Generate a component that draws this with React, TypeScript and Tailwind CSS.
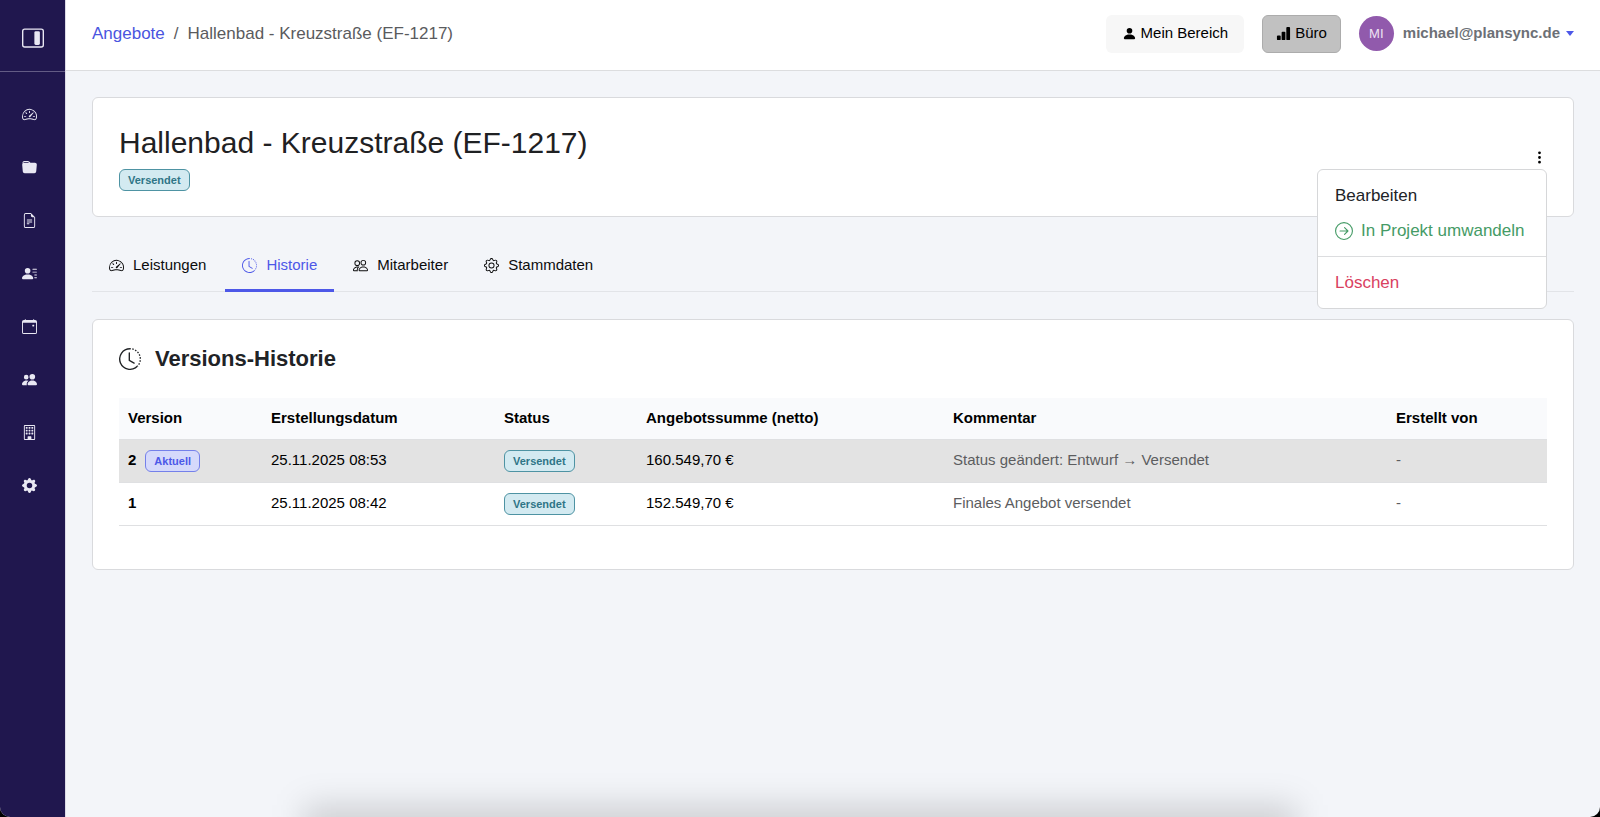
import type { IconType } from 'react-icons'
import {
  BsArrowRightCircle,
  BsBarChartFill,
  BsBuilding,
  BsCalendarEvent,
  BsClockHistory,
  BsFileEarmarkText,
  BsFolderFill,
  BsGear,
  BsGearFill,
  BsLayoutSidebarInsetReverse,
  BsPeople,
  BsPeopleFill,
  BsPersonFill,
  BsPersonLinesFill,
  BsSpeedometer2,
  BsThreeDotsVertical,
} from 'react-icons/bs'

// ─── Data ─────────────────────────────────────────────────────────────────────

interface NavItem {
  label: string
  icon: IconType
}

const NAV_ITEMS: NavItem[] = [
  { label: 'Dashboard', icon: BsSpeedometer2 },
  { label: 'Projekte', icon: BsFolderFill },
  { label: 'Angebote', icon: BsFileEarmarkText },
  { label: 'Kontakte', icon: BsPersonLinesFill },
  { label: 'Kalender', icon: BsCalendarEvent },
  { label: 'Mitarbeiter', icon: BsPeopleFill },
  { label: 'Firma', icon: BsBuilding },
  { label: 'Einstellungen', icon: BsGearFill },
]

const TABS: NavItem[] = [
  { label: 'Leistungen', icon: BsSpeedometer2 },
  { label: 'Historie', icon: BsClockHistory },
  { label: 'Mitarbeiter', icon: BsPeople },
  { label: 'Stammdaten', icon: BsGear },
]

interface Version {
  version: number
  current: boolean
  createdAt: string
  status: string
  total: string
  comment: string
  createdBy: string
}

const VERSIONS: Version[] = [
  {
    version: 2,
    current: true,
    createdAt: '25.11.2025 08:53',
    status: 'Versendet',
    total: '160.549,70 €',
    comment: 'Status geändert: Entwurf → Versendet',
    createdBy: '-',
  },
  {
    version: 1,
    current: false,
    createdAt: '25.11.2025 08:42',
    status: 'Versendet',
    total: '152.549,70 €',
    comment: 'Finales Angebot versendet',
    createdBy: '-',
  },
]

// ─── Sub-components ───────────────────────────────────────────────────────────

function StatusBadge({ label }: { label: string }) {
  return (
    <span className="inline-block rounded-md border border-[#4e93a3] bg-[#d3eaf1] px-2 text-[11px] leading-5 font-bold text-[#2f7587]">
      {label}
    </span>
  )
}

function CurrentBadge() {
  return (
    <span className="inline-block rounded-md border border-[#7480ea] bg-[#d5d9fb] px-2 text-[11px] leading-5 font-bold text-[#4d58e8]">
      Aktuell
    </span>
  )
}

function Sidebar() {
  return (
    <aside className="flex w-[66px] shrink-0 flex-col border-r border-[#dcdae6] bg-[#20174e] text-[#e9e8f3]">
      <div className="flex h-[72px] items-center border-b border-[#635c85] pt-1 pl-[22px]">
        <button type="button" aria-label="Seitenleiste">
          <BsLayoutSidebarInsetReverse size={22} />
        </button>
      </div>
      <nav className="flex flex-col pt-4">
        {NAV_ITEMS.map(({ label, icon: Icon }) => (
          <a key={label} href="#" aria-label={label} className="flex h-[53px] items-center pl-[22px]">
            <Icon size={15} />
          </a>
        ))}
      </nav>
    </aside>
  )
}

function TopBar() {
  return (
    <header className="flex h-[71px] items-center justify-between border-b border-[#dcdddf] bg-white px-[26px] pb-[3px]">
      <nav aria-label="Breadcrumb" className="flex gap-[9px] text-[17px] text-[#5a5b5e]">
        <a href="#" className="text-[#4a55e0]">
          Angebote
        </a>
        <span>/</span>
        <span>Hallenbad - Kreuzstraße (EF-1217)</span>
      </nav>
      <div className="flex items-center gap-[18px] text-[15px]">
        <button type="button" className="flex h-[38px] items-center gap-1 rounded-md bg-[#f7f7f7] px-4">
          <BsPersonFill size={15} />
          Mein Bereich
        </button>
        <button
          type="button"
          className="flex h-[38px] items-center gap-1 rounded-md border border-[#acacac] bg-[#c1c1c1] px-[13px]"
        >
          <BsBarChartFill size={15} />
          Büro
        </button>
        <button type="button" className="flex items-center gap-[9px] font-bold text-[#6c7076]">
          <span className="flex size-[35px] items-center justify-center rounded-full bg-[#915aac] text-[13px] font-normal text-[#eee3f3]">
            MI
          </span>
          <span className="flex items-center gap-[6px]">
            michael@plansync.de
            <span className="border-x-4 border-t-5 border-x-transparent border-t-[#4d58e8]" />
          </span>
        </button>
      </div>
    </header>
  )
}

function ActionsMenu() {
  return (
    <div className="relative">
      <button type="button" aria-label="Aktionen" className="flex h-6 w-[15px] items-center">
        <BsThreeDotsVertical size={15} />
      </button>
      <div className="absolute top-full right-0 z-10 w-[230px] rounded-md border border-[#d6d7d9] bg-white py-2 text-[17px]">
        <a href="#" className="block px-[17px] leading-[35px] text-[#212326]">
          Bearbeiten
        </a>
        <a href="#" className="flex items-center gap-2 px-[17px] leading-[35px] whitespace-nowrap text-[#459b66]">
          <BsArrowRightCircle size={18} />
          In Projekt umwandeln
        </a>
        <hr className="my-2 border-[#dcdddf]" />
        <a href="#" className="block px-[17px] leading-[35px] text-[#d9415f]">
          Löschen
        </a>
      </div>
    </div>
  )
}

function Tabs({ active }: { active: string }) {
  return (
    <nav className="mt-[27px] flex gap-[2px] border-b border-[#e2e4e8] text-[15px]">
      {TABS.map(({ label, icon: Icon }) => (
        <a
          key={label}
          href="#"
          className={
            label === active
              ? '-mb-px flex h-[48px] items-center gap-[9px] border-b-3 border-[#4d58e8] px-[17px] pb-[3px] text-[#4d58e8]'
              : '-mb-px flex h-[48px] items-center gap-[9px] border-b-3 border-transparent px-[17px] pb-[3px] text-[#0c0c0d]'
          }
        >
          <Icon size={15} />
          {label}
        </a>
      ))}
    </nav>
  )
}

function VersionTable({ versions }: { versions: Version[] }) {
  return (
    <table className="w-full table-fixed text-left text-[15px]">
      <thead className="bg-[#f9fafc]">
        <tr className="h-[41px] border-b border-[#dfe0e2]">
          <th className="w-[143px] px-[9px]">Version</th>
          <th className="w-[233px] px-[9px]">Erstellungsdatum</th>
          <th className="w-[142px] px-[9px]">Status</th>
          <th className="w-[307px] px-[9px]">Angebotssumme (netto)</th>
          <th className="px-[9px]">Kommentar</th>
          <th className="w-[160px] px-[9px]">Erstellt von</th>
        </tr>
      </thead>
      <tbody>
        {versions.map((v) => (
          <tr
            key={v.version}
            className={
              v.current ? 'h-[43px] border-b border-[#dfe0e2] bg-[#e3e3e3]' : 'h-[43px] border-b border-[#dfe0e2]'
            }
          >
            <td className="px-[9px]">
              <div className="flex items-center gap-[9px]">
                <strong>{v.version}</strong>
                {v.current && <CurrentBadge />}
              </div>
            </td>
            <td className="px-[9px]">{v.createdAt}</td>
            <td className="px-[9px]">
              <div className="flex">
                <StatusBadge label={v.status} />
              </div>
            </td>
            <td className="px-[9px]">{v.total}</td>
            <td className="px-[9px] text-[#5c5d5f]">{v.comment}</td>
            <td className="px-[9px] text-[#5c5d5f]">{v.createdBy}</td>
          </tr>
        ))}
      </tbody>
    </table>
  )
}

// ─── App ──────────────────────────────────────────────────────────────────────

export default function App() {
  return (
    <div className="bg-black font-['Liberation_Sans',Arial,sans-serif] text-black">
      <div className="relative flex min-h-screen overflow-hidden rounded-b-[10px] bg-[#f3f5f9]">
        <Sidebar />
        <div className="min-w-0 flex-1">
          <TopBar />
          <main className="px-[26px] pt-[26px]">
            <section className="flex h-[120px] items-center justify-between rounded-md border border-[#d9dadd] bg-white px-[26px]">
              <div>
                <h1 className="text-[30px] leading-[37px] text-[#1f2123]">Hallenbad - Kreuzstraße (EF-1217)</h1>
                <div className="mt-2 flex">
                  <StatusBadge label="Versendet" />
                </div>
              </div>
              <ActionsMenu />
            </section>

            <Tabs active="Historie" />

            <section className="mt-[27px] rounded-md border border-[#d9dadd] bg-white px-[26px] pt-[26px] pb-[43px]">
              <h2 className="mb-[26px] flex items-center gap-[14px] text-[22px] leading-[26px] font-bold text-[#212326]">
                <BsClockHistory size={22} />
                Versions-Historie
              </h2>
              <VersionTable versions={VERSIONS} />
            </section>
          </main>
        </div>
        {/* soft shadow along the lower window edge */}
        <div className="pointer-events-none absolute -bottom-9 left-[19%] h-12 w-[62%] bg-black/15 blur-[16px]" />
      </div>
    </div>
  )
}
